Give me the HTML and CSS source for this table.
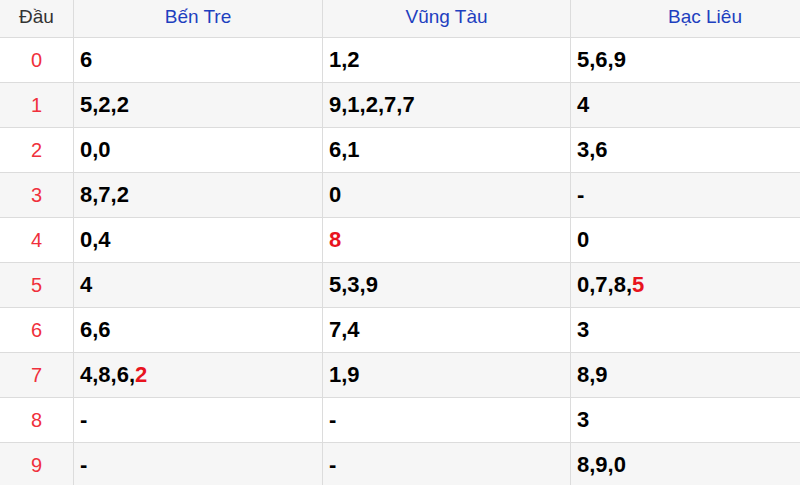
FILE: index.html
```html
<!DOCTYPE html>
<html lang="vi">
<head>
<meta charset="utf-8">
<link rel="stylesheet" href="styles.css">
</head>
<body>
<div class="table">
  <div class="row head">
    <div class="cell label">Đầu</div>
    <div class="cell title">Bến Tre</div>
    <div class="cell title">Vũng Tàu</div>
    <div class="cell title">Bạc Liêu</div>
  </div>
  <div class="row">
    <div class="cell num">0</div>
    <div class="cell val">6</div>
    <div class="cell val">1,2</div>
    <div class="cell val">5,6,9</div>
  </div>
  <div class="row alt">
    <div class="cell num">1</div>
    <div class="cell val">5,2,2</div>
    <div class="cell val">9,1,2,7,7</div>
    <div class="cell val">4</div>
  </div>
  <div class="row">
    <div class="cell num">2</div>
    <div class="cell val">0,0</div>
    <div class="cell val">6,1</div>
    <div class="cell val">3,6</div>
  </div>
  <div class="row alt">
    <div class="cell num">3</div>
    <div class="cell val">8,7,2</div>
    <div class="cell val">0</div>
    <div class="cell val">-</div>
  </div>
  <div class="row">
    <div class="cell num">4</div>
    <div class="cell val">0,4</div>
    <div class="cell val"><span class="hl">8</span></div>
    <div class="cell val">0</div>
  </div>
  <div class="row alt">
    <div class="cell num">5</div>
    <div class="cell val">4</div>
    <div class="cell val">5,3,9</div>
    <div class="cell val">0,7,8,<span class="hl">5</span></div>
  </div>
  <div class="row">
    <div class="cell num">6</div>
    <div class="cell val">6,6</div>
    <div class="cell val">7,4</div>
    <div class="cell val">3</div>
  </div>
  <div class="row alt">
    <div class="cell num">7</div>
    <div class="cell val">4,8,6,<span class="hl">2</span></div>
    <div class="cell val">1,9</div>
    <div class="cell val">8,9</div>
  </div>
  <div class="row">
    <div class="cell num">8</div>
    <div class="cell val">-</div>
    <div class="cell val">-</div>
    <div class="cell val">3</div>
  </div>
  <div class="row alt">
    <div class="cell num">9</div>
    <div class="cell val">-</div>
    <div class="cell val">-</div>
    <div class="cell val">8,9,0</div>
  </div>
</div>
</body>
</html>
```

FILE: styles.css
```css
html, body {
  margin: 0;
  padding: 0;
  background: #ffffff;
}
body {
  font-family: "Liberation Sans", Arial, sans-serif;
  overflow: hidden;
}
.table {
  width: 840px;
}
.row {
  display: grid;
  grid-template-columns: 74px 249px 248px 269px;
  height: 45px;
  box-sizing: border-box;
  border-bottom: 1px solid #dcdcdc;
  background: #ffffff;
}
.row.alt, .row.head {
  background: #f6f6f6;
}
.row.head {
  height: 38px;
}
.head .cell {
  padding-bottom: 3px;
}
.cell {
  display: flex;
  align-items: center;
  border-right: 1px solid #dcdcdc;
  box-sizing: border-box;
}
.label {
  justify-content: center;
  font-size: 19px;
  color: #333333;
}
.title {
  justify-content: center;
  font-size: 19px;
  color: #1e3fbf;
}
.num {
  justify-content: center;
  font-size: 20px;
  color: #f0303c;
}
.val {
  padding-left: 6px;
  font-size: 22px;
  font-weight: bold;
  color: #000000;
}
.hl {
  color: #e8141e;
}
```
